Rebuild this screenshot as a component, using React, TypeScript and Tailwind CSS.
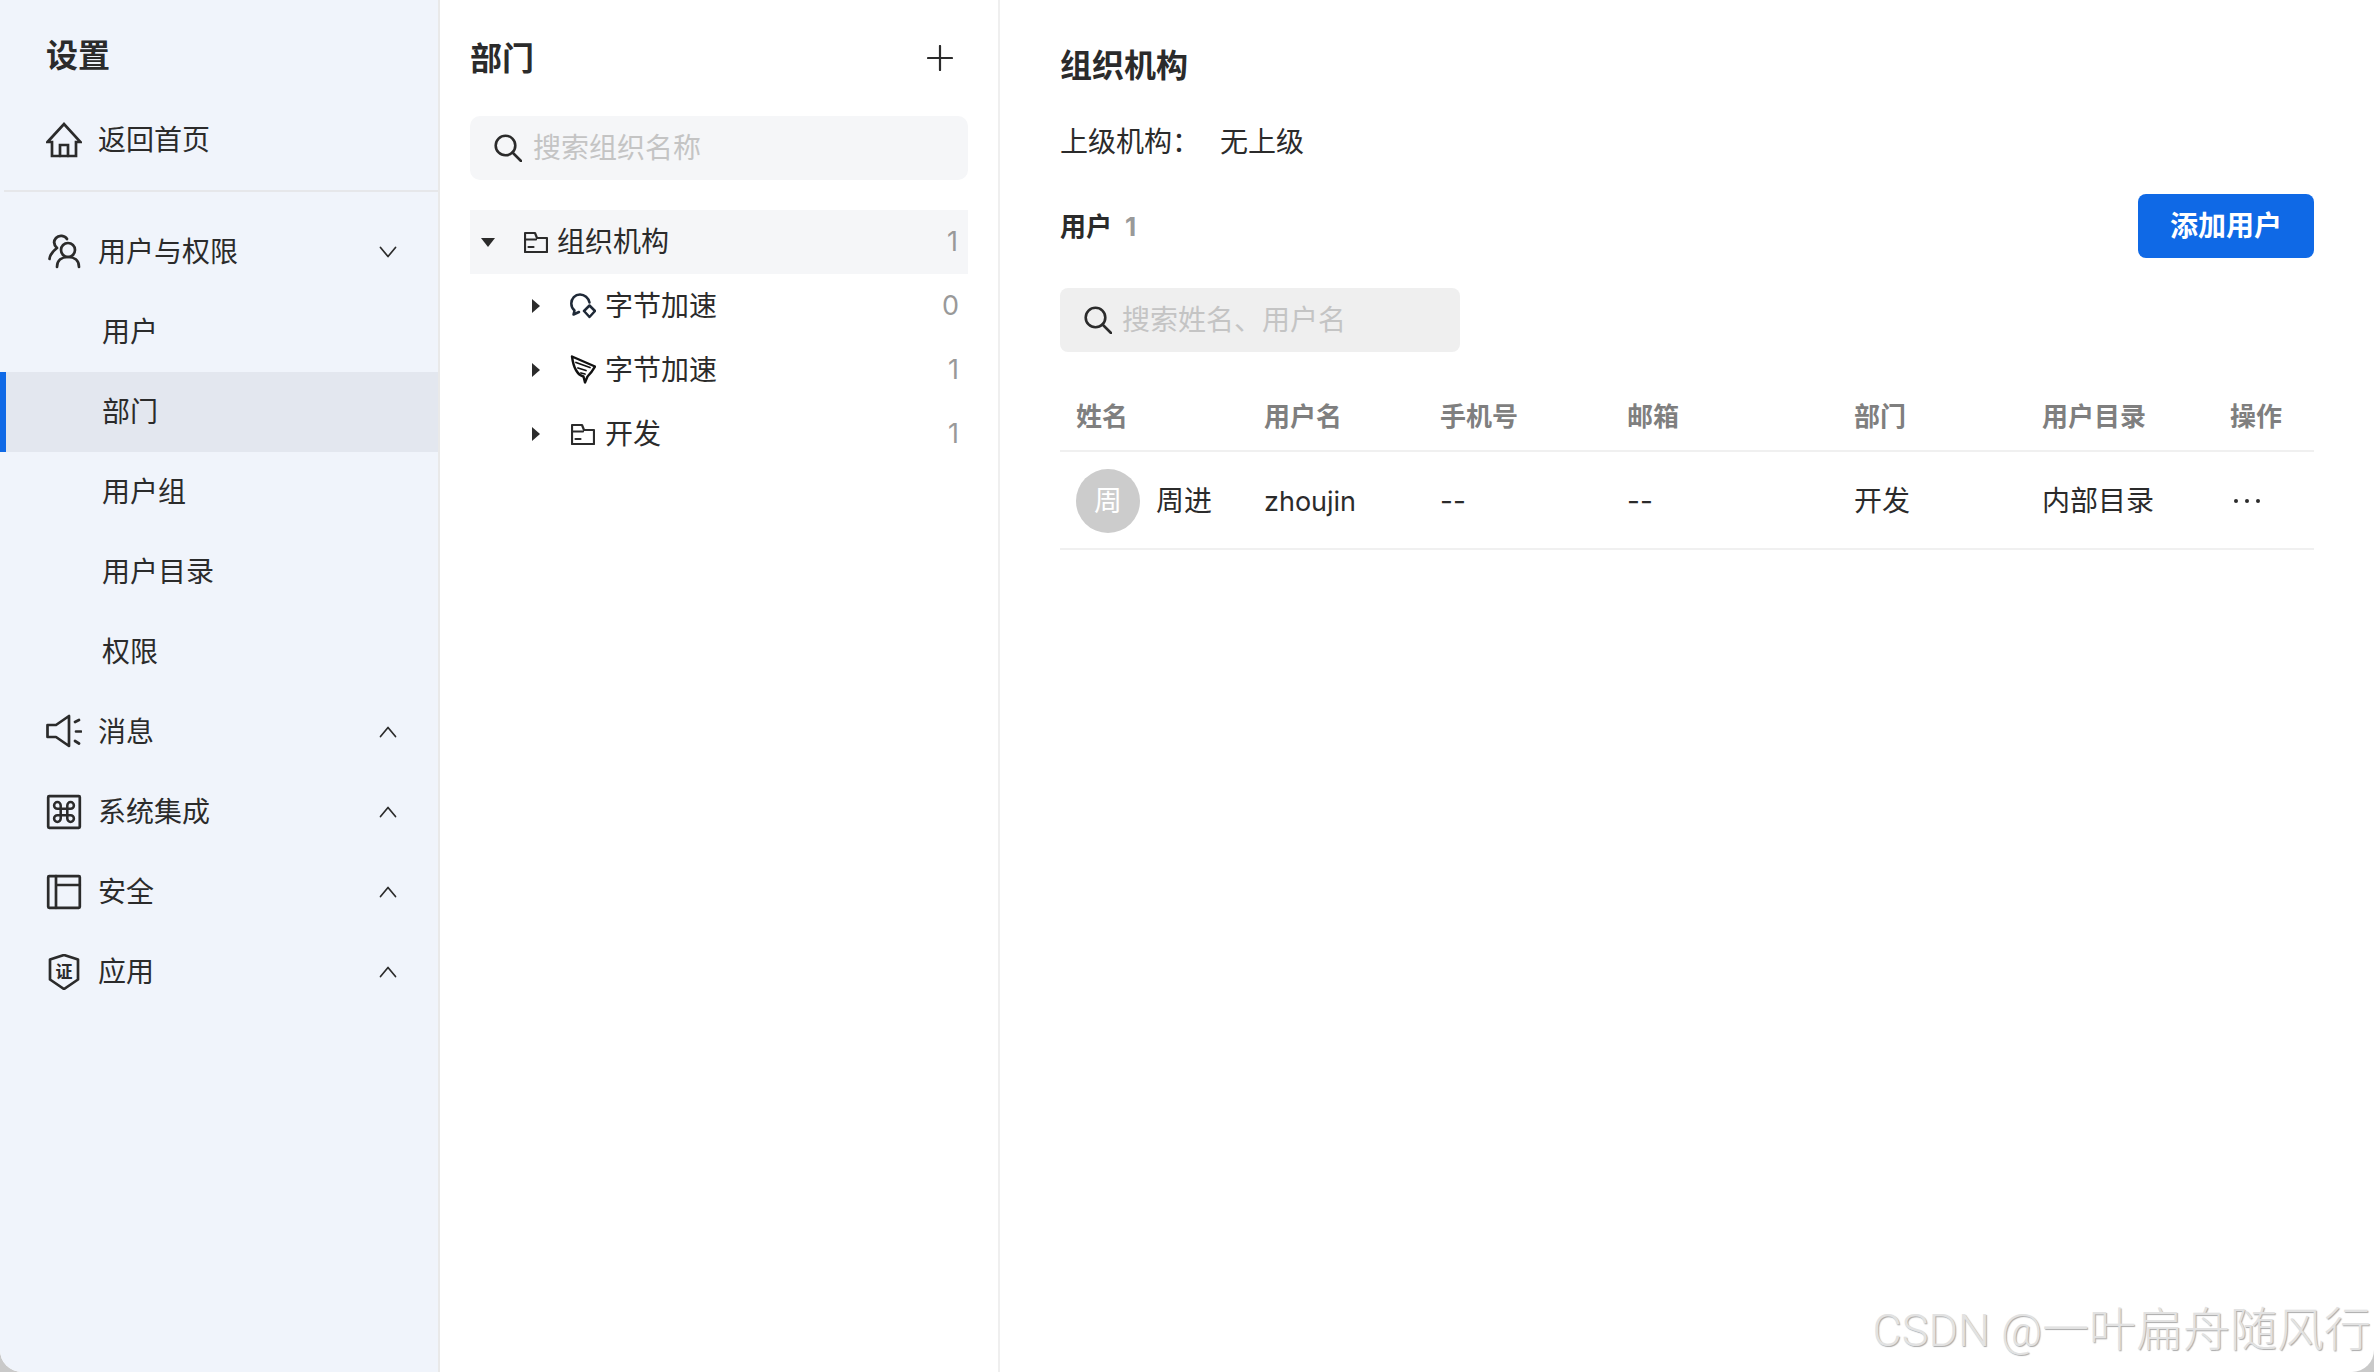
import React from "react";

const S = ({ w, h, children, sw = 2.7, className = "" }: { w: number; h: number; children: React.ReactNode; sw?: number; className?: string }) => (
  <svg width={w} height={h} viewBox={`0 0 ${w} ${h}`} fill="none" stroke="currentColor" strokeWidth={sw} strokeLinecap="round" strokeLinejoin="round" className={`shrink-0 ${className}`}>
    {children}
  </svg>
);

const Home = () => (
  <S w={36} h={36}>
    <path d="M1.500 20L18 2l16.500 18h-4.500v14H6V20z" strokeLinejoin="miter" />
    <path d="M14 34V23h8v11" strokeLinejoin="miter" />
  </S>
);
const Users = () => (
  <S w={36} h={36}>
    <circle cx="22" cy="16" r="7" />
    <path d="M11 33c0-7 5-10 11-10s11 3 11 10" />
    <path d="M21 5c-2-3.500-8-4.500-11-1-3 3.500-2 7 1 10-4 3-7 6-7.500 11" />
  </S>
);
const Speaker = () => (
  <S w={36} h={36}>
    <path d="M23 2v30L10 23H1.500V11H10z" />
    <path d="M29 8l4-2M30 17.500h5M29 27l4 2.500" />
  </S>
);
const Cmd = () => (
  <S w={36} h={36}>
    <rect x="2.200" y="2.200" width="31.600" height="31.600" rx="1" />
    <g transform="translate(4.800 4.800) scale(1.100)" strokeWidth="2.300">
      <path d="M15 6v12a3 3 0 1 0 3-3H6a3 3 0 1 0 3 3V6a3 3 0 1 0-3 3h12a3 3 0 1 0-3-3" />
    </g>
  </S>
);
const Panel = () => (
  <S w={36} h={36}>
    <rect x="2.200" y="2.200" width="31.600" height="31.600" rx="1" />
    <path d="M10 2.200v31.600M10 11h23.800" />
  </S>
);
const Shield = () => (
  <S w={36} h={36}>
    <path d="M18 1l14 4.500v20L18 35 4 25.500v-20z" />
    <text x="18" y="24" textAnchor="middle" fontSize="17" fontWeight="700" fill="currentColor" stroke="none" fontFamily="'Noto Sans CJK SC', sans-serif">证</text>
  </S>
);
const Chevron = ({ up }: { up?: boolean }) => (
  <S w={18} h={12} sw={1.7}>
    <path d={up ? "M1.500 10.500L9 1.500l7.500 9" : "M1.500 1.500L9 10.500l7.500-9"} />
  </S>
);
const SearchIcon = () => (
  <S w={28} h={28} sw={2.6}>
    <circle cx="11.500" cy="11.500" r="9.800" />
    <path d="M18.500 18.500L27 27" />
  </S>
);
const Folder = () => (
  <S w={24} h={22} sw={2.2}>
    <path d="M1 2h10l2 5h10v14H1z" />
    <path d="M1 8.500h11M4.500 16h5" />
  </S>
);
const Chat = () => (
  <svg width="26" height="26" viewBox="0 0 26 26" fill="none" stroke="#1f2937" strokeWidth="2.500" strokeLinecap="round" strokeLinejoin="round" className="shrink-0">
    <path d="M19.500 9.500C18.500 4.800 14.500 1.500 10 1.500 5 1.500 1.300 5.500 1.300 10.500c0 3 1.500 5.500 3.200 7L3.500 21.500l5.500-2.500" />
    <path d="M19.500 12.500l5.500 5.500-5.500 6-5.500-6z" />
  </svg>
);
const Wing = () => (
  <svg width="26" height="30" viewBox="0 0 26 30" fill="none" stroke="#111" strokeWidth="2.400" strokeLinejoin="round" strokeLinecap="round" className="shrink-0">
    <path d="M2 1.500L25 11.500C23 15 20 19 17.500 21.500L15 27.500 13.500 21.500C8 20 3.500 13 2 1.500z" />
    <path d="M6 7.500l14 5M8 13l8 2.500M11 18l4 1" strokeWidth="1.800" />
  </svg>
);
const CaretDown = () => (
  <svg width="14" height="9" viewBox="0 0 14 9" className="shrink-0"><path d="M0 0h14L7 9z" fill="#2b2b2b" /></svg>
);
const CaretRight = () => (
  <svg width="8" height="14" viewBox="0 0 8 14" className="shrink-0"><path d="M0 0l8 7-8 7z" fill="#2b2b2b" /></svg>
);

const NavRow = ({ icon, label, chevron }: { icon: React.ReactNode; label: string; chevron?: "up" | "down" }) => (
  <div className="flex h-[80px] items-center pl-[46px] pr-[41px]">
    {icon}
    <span className="ml-[16px] flex-1">{label}</span>
    {chevron && <Chevron up={chevron === "up"} />}
  </div>
);
const SubRow = ({ label, active }: { label: string; active?: boolean }) => (
  <div className={`flex h-[80px] items-center ${active ? "border-l-[6px] border-[#0f69e6] bg-[#e3e7ef] pl-[96px]" : "pl-[102px]"}`}>{label}</div>
);

const TreeChild = ({ icon, label, count }: { icon: React.ReactNode; label: string; count: string }) => (
  <div className="flex h-[64px] items-center pl-[62px] pr-[9px]">
    <CaretRight />
    <span className="ml-[30px] flex w-[26px] justify-center">{icon}</span>
    <span className="ml-[9px] flex-1">{label}</span>
    <span className="text-[27px] text-[#999999]">{count}</span>
  </div>
);

const cols = "grid grid-cols-[188px_176px_187px_227px_188px_188px_100px]";

export default function App() {
  return (
    <div className="h-[1372px] w-[2374px] overflow-hidden bg-[#c9c9c9] font-['Inter','Noto_Sans_CJK_SC',sans-serif] text-[28px] text-[#2b2b2b]">
      <div className="relative flex h-full overflow-hidden rounded-b-[22px] bg-white">
        <aside className="h-full w-[440px] shrink-0 border-r-2 border-[#e9e9e9] bg-[#f0f4fb]">
          <div className="flex h-[112px] items-center pl-[46px] text-[32px] font-semibold">设置</div>
          <div className="flex h-[56px] items-center pl-[46px]">
            <Home />
            <span className="ml-[16px]">返回首页</span>
          </div>
          <div className="mt-[22px] mb-[20px] ml-[4px] h-[2px] bg-[#e6e7ea]" />
          <NavRow icon={<Users />} label="用户与权限" chevron="down" />
          <SubRow label="用户" />
          <SubRow label="部门" active />
          <SubRow label="用户组" />
          <SubRow label="用户目录" />
          <SubRow label="权限" />
          <NavRow icon={<Speaker />} label="消息" chevron="up" />
          <NavRow icon={<Cmd />} label="系统集成" chevron="up" />
          <NavRow icon={<Panel />} label="安全" chevron="up" />
          <NavRow icon={<Shield />} label="应用" chevron="up" />
        </aside>

        <section className="h-full w-[560px] shrink-0 border-r-2 border-[#efefef] px-[30px]">
          <div className="flex h-[116px] items-center justify-between">
            <span className="pt-[2px] text-[32px] font-semibold">部门</span>
            <S w={26} h={26} sw={2.2} className="mr-[15px]">
              <path d="M13 1v24M1 13h24" />
            </S>
          </div>
          <div className="flex h-[64px] items-center gap-[11px] rounded-[10px] bg-[#f5f6f8] pl-[24px]">
            <SearchIcon />
            <span className="text-[#c4c4c4]">搜索组织名称</span>
          </div>
          <div className="mt-[30px]">
            <div className="flex h-[64px] items-center bg-[#f5f6f8] pl-[11px] pr-[10px]">
              <CaretDown />
              <span className="ml-[29px]"><Folder /></span>
              <span className="ml-[9px] flex-1">组织机构</span>
              <span className="text-[27px] text-[#999999]">1</span>
            </div>
            <TreeChild icon={<Chat />} label="字节加速" count="0" />
            <TreeChild icon={<Wing />} label="字节加速" count="1" />
            <TreeChild icon={<Folder />} label="开发" count="1" />
          </div>
        </section>

        <main className="h-full flex-1 pl-[60px] pr-[60px] pt-[46px]">
          <div className="text-[32px] font-semibold leading-[40px]">组织机构</div>
          <div className="mt-[36px] flex gap-[20px] leading-[40px]">
            <span>上级机构：</span>
            <span>无上级</span>
          </div>
          <div className="mt-[32px] flex h-[64px] items-center justify-between">
            <div className="flex items-center gap-[13px] text-[26px] font-semibold">
              <span>用户</span>
              <span className="font-bold text-[#999999]">1</span>
            </div>
            <button className="h-[64px] w-[176px] rounded-[8px] bg-[#0f69e6] text-[28px] font-semibold text-white">添加用户</button>
          </div>
          <div className="mt-[30px] flex h-[64px] w-[400px] items-center gap-[10px] rounded-[8px] bg-[#efefef] pl-[24px]">
            <SearchIcon />
            <span className="text-[#c4c4c4]">搜索姓名、用户名</span>
          </div>
          <div className={`${cols} mt-[32px] h-[68px] items-center border-b-2 border-[#f0f0f0] pb-[2px] text-[26px] font-semibold text-[#7f7f7f]`}>
            {["姓名", "用户名", "手机号", "邮箱", "部门", "用户目录", "操作"].map((h) => (
              <div key={h} className="pl-[16px]">{h}</div>
            ))}
          </div>
          <div className={`${cols} h-[98px] items-center border-b-2 border-[#f0f0f0] pt-[2px]`}>
            <div className="flex items-center gap-[16px] pl-[16px]">
              <div className="flex h-[64px] w-[64px] items-center justify-center rounded-full bg-[#cccccc] text-white">周</div>
              <span>周进</span>
            </div>
            <div className="pl-[16px] pt-[2px] text-[27px]">zhoujin</div>
            <div className="pl-[16px]">--</div>
            <div className="pl-[16px]">--</div>
            <div className="pl-[16px]">开发</div>
            <div className="pl-[16px]">内部目录</div>
            <div className="flex gap-[7px] pl-[20px]">
              <i className="h-[4px] w-[4px] rounded-full bg-[#2b2b2b]" />
              <i className="h-[4px] w-[4px] rounded-full bg-[#2b2b2b]" />
              <i className="h-[4px] w-[4px] rounded-full bg-[#2b2b2b]" />
            </div>
          </div>
        </main>

        <div className="absolute bottom-[13px] right-[3px] font-['Roboto','Noto_Sans_CJK_SC',sans-serif] text-[47px] font-light leading-[56px] text-[#e2e2e2] [text-shadow:1px_1px_1px_#aaaaaa]">
          <span className="text-[45px]">CSDN @</span>一叶扁舟随风行
        </div>
      </div>
    </div>
  );
}
